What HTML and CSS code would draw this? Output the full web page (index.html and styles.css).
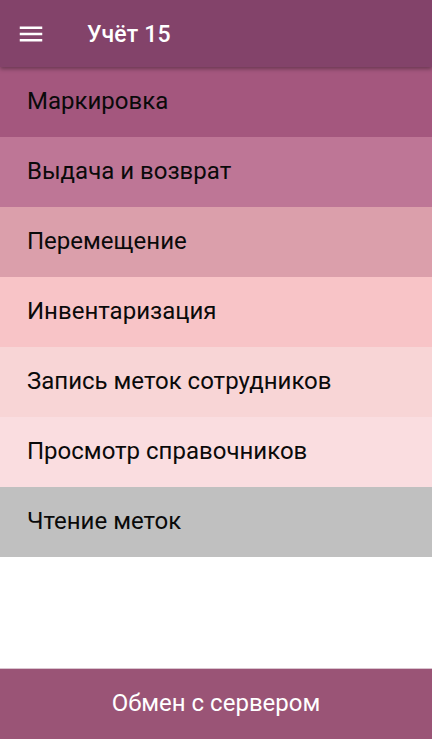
FILE: index.html
```html
<!DOCTYPE html>
<html lang="ru">
<head>
<meta charset="utf-8">
<link rel="stylesheet" href="styles.css">
</head>
<body>
<div class="app">
  <header class="toolbar">
    <svg class="menu-icon" viewBox="0 0 24 24" width="30" height="30"><path d="M3 18h18v-2H3v2zm0-5h18v-2H3v2zm0-7v2h18V6H3z" fill="#fff"/></svg>
    <div class="title">Учёт 15</div>
  </header>
  <ul class="menu">
    <li class="item c1">Маркировка</li>
    <li class="item c2">Выдача и возврат</li>
    <li class="item c3">Перемещение</li>
    <li class="item c4">Инвентаризация</li>
    <li class="item c5">Запись меток сотрудников</li>
    <li class="item c6">Просмотр справочников</li>
    <li class="item c7">Чтение меток</li>
  </ul>
  <div class="footer">Обмен с сервером</div>
</div>
</body>
</html>
```
FILE: styles.css
```css
html, body { margin: 0; padding: 0; }
body { font-family: Roboto, "Noto Sans", sans-serif; background: #fff; }
.app { width: 432px; height: 739px; display: flex; flex-direction: column; overflow: hidden; }
.toolbar {
  height: 67px; flex: none; background: #83436a; display: flex; align-items: center;
  box-shadow: 0 2px 4px rgba(0,0,0,0.35); position: relative; z-index: 2;
}
.menu-icon { margin-left: 16px; display: block; }
.title { color: #fff; font-weight: 500; font-size: 23px; margin-left: 41px; letter-spacing: 0.2px; padding-top: 2px; }
.menu { list-style: none; margin: 0; padding: 0; }
.item { height: 70px; box-sizing: border-box; display: flex; align-items: center; padding: 0 0 3px 27px; font-size: 24px; color: #0a0a0a; }
.c1 { background: #a4577e; }
.c2 { background: #be7696; }
.c3 { background: #db9fab; }
.c4 { background: #f8c4c7; }
.c5 { background: #f8d5d6; }
.c6 { background: #fadde0; }
.c7 { background: #c0c0c0; }
.footer {
  margin-top: auto; height: 71px; box-sizing: border-box; padding-bottom: 3px; background: #9a5476; color: #fff; font-size: 24px;
  display: flex; align-items: center; justify-content: center; border-top: 1px solid #d9c4cf;
}
```
